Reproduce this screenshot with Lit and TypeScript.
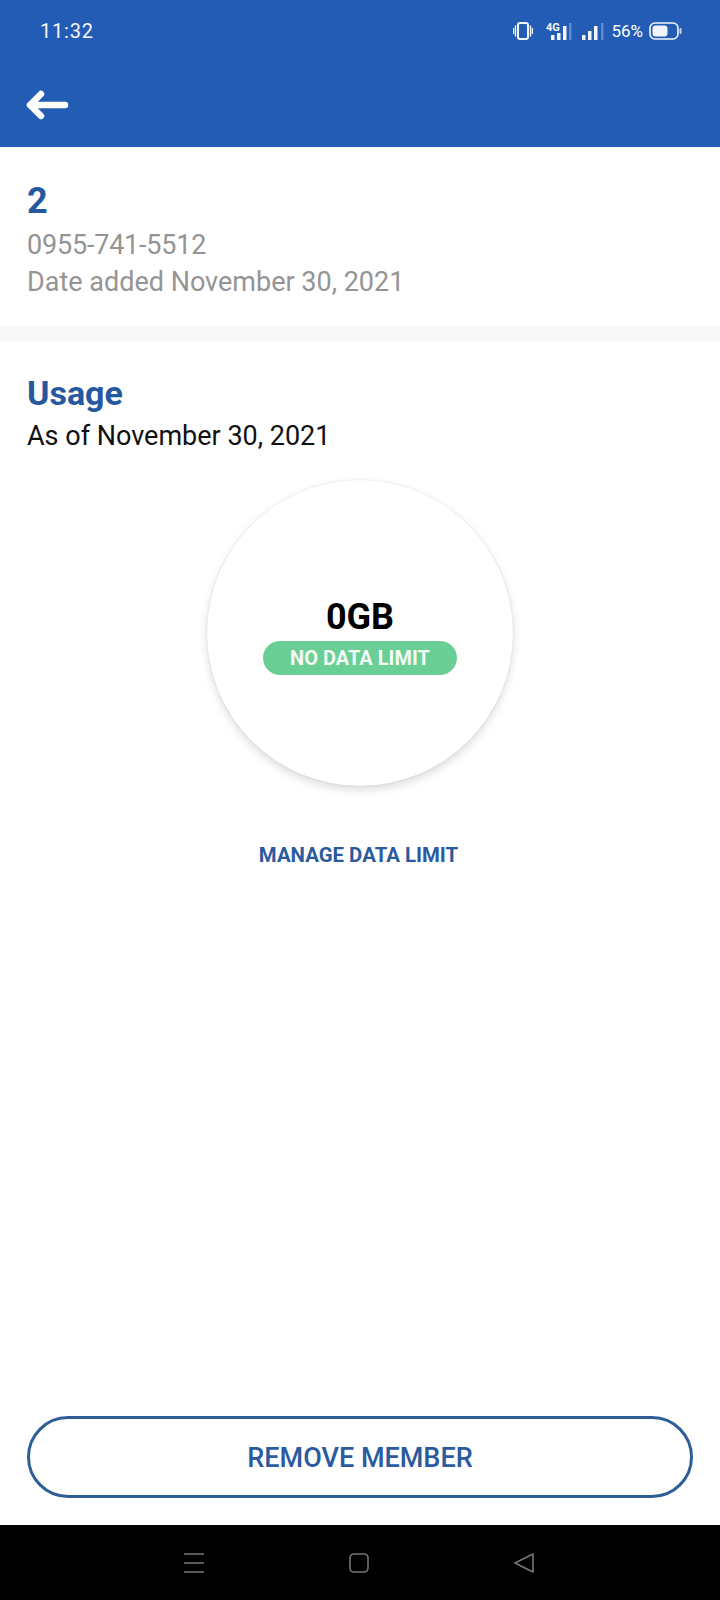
import {html, css, LitElement} from 'lit';
import {customElement} from 'lit/decorators.js';

@customElement('app-root')
export class AppRoot extends LitElement {
  static styles = css`
    :host {
      display: block;
      font-family: Roboto, "Liberation Sans", sans-serif;
    }
    .page {
      display: flex;
      flex-direction: column;
      height: 1600px;
      background: #fff;
      overflow: hidden;
    }
    .header {
      height: 147px;
      flex: none;
      background: #235cb5;
      color: #fff;
      box-sizing: border-box;
      display: flex;
      flex-direction: column;
    }
    .status {
      display: flex;
      align-items: center;
      justify-content: space-between;
      height: 32px;
      margin-top: 15px;
      padding: 0 38px 0 40px;
    }
    .time {
      font-size: 20px;
      letter-spacing: 0.8px;
      color: #f2f6fc;
    }
    .status-right {
      display: flex;
      align-items: center;
    }
    .vib {
      margin-right: 7px;
    }
    .sig-4g {
      margin-right: 9px;
    }
    .pct {
      font-size: 17px;
      margin: 0 6px 0 7px;
    }
    .back {
      display: block;
      margin: 42px 0 0 25px;
    }
    .info {
      flex: none;
      height: 179px;
      box-sizing: border-box;
      padding: 34px 27px 0;
    }
    .title {
      color: #25589f;
      font-weight: 700;
      font-size: 36px;
      line-height: 40px;
    }
    .grey {
      color: #949494;
      font-size: 27px;
      line-height: 37px;
    }
    .phone {
      margin-top: 6px;
      letter-spacing: -0.2px;
    }
    .band {
      flex: none;
      height: 16px;
      background: #f8f8f8;
    }
    .usage {
      flex: 1;
      display: flex;
      flex-direction: column;
      padding: 31px 27px 0;
    }
    .usage-title {
      font-size: 34px;
      line-height: 40px;
    }
    .as-of {
      color: #111;
      font-size: 27px;
      line-height: 37px;
      margin-top: 5px;
    }
    .circle {
      align-self: center;
      margin-top: 25px;
      width: 306px;
      height: 306px;
      border-radius: 50%;
      background: #fff;
      box-shadow: 0 4px 10px rgba(0, 0, 0, 0.14), 0 0 2px rgba(0, 0, 0, 0.12);
      display: flex;
      flex-direction: column;
      align-items: center;
      box-sizing: border-box;
      padding-top: 116px;
    }
    .amount {
      font-size: 36px;
      font-weight: 700;
      line-height: 42px;
      color: #000;
    }
    .pill {
      margin-top: 3px;
      width: 194px;
      height: 34px;
      line-height: 35px;
      text-align: center;
      border-radius: 17px;
      background: #6acf95;
      color: #f4fbf6;
      font-size: 20px;
      font-weight: 700;
    }
    .manage {
      align-self: center;
      margin-top: 57px;
      margin-right: 3px;
      color: #2b5a9e;
      font-size: 20.4px;
      font-weight: 700;
      line-height: 24px;
    }
    .remove {
      margin-top: auto;
      margin-bottom: 27px;
      height: 82px;
      box-sizing: border-box;
      width: 666px;
      padding-top: 2px;
      border: 3px solid #2f5d96;
      border-radius: 41px;
      display: flex;
      align-items: center;
      justify-content: center;
      color: #2b5a9e;
      font-size: 27px;
      font-weight: 500;
    }
    .nav {
      flex: none;
      height: 75px;
      background: #000;
      display: flex;
      align-items: center;
      justify-content: space-between;
      padding: 0 185px 0 183px;
    }
  `;

  private statusIcons() {
    return html`
      <svg class="vib" width="20" height="18" viewBox="0 0 20 18" fill="none" stroke="#f2f6fc">
        <rect x="5" y="1" width="10" height="16" rx="2" stroke-width="2" />
        <path d="M2.5 3.5v11M17.5 3.5v11M0.5 6v6M19.5 6v6" stroke-width="1.4" />
      </svg>
      <svg class="sig-4g" width="32" height="18" viewBox="0 0 32 18" fill="#f2f6fc">
        <text x="6" y="9" font-size="11" font-weight="700" font-family="Roboto">4G</text>
        <rect x="11" y="13" width="3.5" height="5" />
        <rect x="17" y="11" width="3.5" height="7" />
        <rect x="23" y="4" width="3.5" height="14" />
        <rect x="29" y="1" width="2.5" height="17" opacity="0.3" />
      </svg>
      <svg width="23" height="18" viewBox="0 0 23 18" fill="#f2f6fc">
        <rect x="1" y="13" width="3.5" height="5" />
        <rect x="7" y="9" width="3.5" height="9" />
        <rect x="13" y="4" width="3.5" height="14" />
        <rect x="20" y="1" width="2.5" height="17" opacity="0.3" />
      </svg>
      <span class="pct">56%</span>
      <svg width="33" height="18" viewBox="0 0 33 18">
        <rect x="1" y="1" width="28" height="16" rx="5" fill="none" stroke="#f2f6fc" stroke-width="1.6" />
        <rect x="3.5" y="3.5" width="15" height="11" rx="3" fill="#f2f6fc" />
        <rect x="30.5" y="6" width="2" height="6" rx="1" fill="#f2f6fc" opacity="0.8" />
      </svg>
    `;
  }

  render() {
    return html`<div class="page">
      <div class="header">
        <div class="status">
          <span class="time">11:32</span>
          <div class="status-right">${this.statusIcons()}</div>
        </div>
        <svg class="back" width="46" height="32" viewBox="0 0 46 32" fill="none" stroke="#fff"
          stroke-width="6.5" stroke-linecap="round" stroke-linejoin="round">
          <path d="M16 5 L5 16 L16 27 M5 16 H40" />
        </svg>
      </div>

      <div class="info">
        <div class="title">2</div>
        <div class="grey phone">0955-741-5512</div>
        <div class="grey">Date added November 30, 2021</div>
      </div>
      <div class="band"></div>

      <div class="usage">
        <div class="title usage-title">Usage</div>
        <div class="as-of">As of November 30, 2021</div>
        <div class="circle">
          <div class="amount">0GB</div>
          <div class="pill">NO DATA LIMIT</div>
        </div>
        <div class="manage">MANAGE DATA LIMIT</div>
        <div class="remove">REMOVE MEMBER</div>
      </div>

      <div class="nav">
        <svg width="22" height="22" viewBox="0 0 22 22" stroke="#777" stroke-width="1.6">
          <path d="M1 2h20M1 11h20M1 20h20" />
        </svg>
        <svg width="22" height="22" viewBox="0 0 22 22" fill="none" stroke="#777" stroke-width="1.6">
          <rect x="2" y="2" width="18" height="18" rx="4" />
        </svg>
        <svg width="22" height="22" viewBox="0 0 22 22" fill="none" stroke="#777" stroke-width="1.6" stroke-linejoin="round">
          <path d="M2 11 L20 2 V20 Z" />
        </svg>
      </div>
    </div>`;
  }
}
